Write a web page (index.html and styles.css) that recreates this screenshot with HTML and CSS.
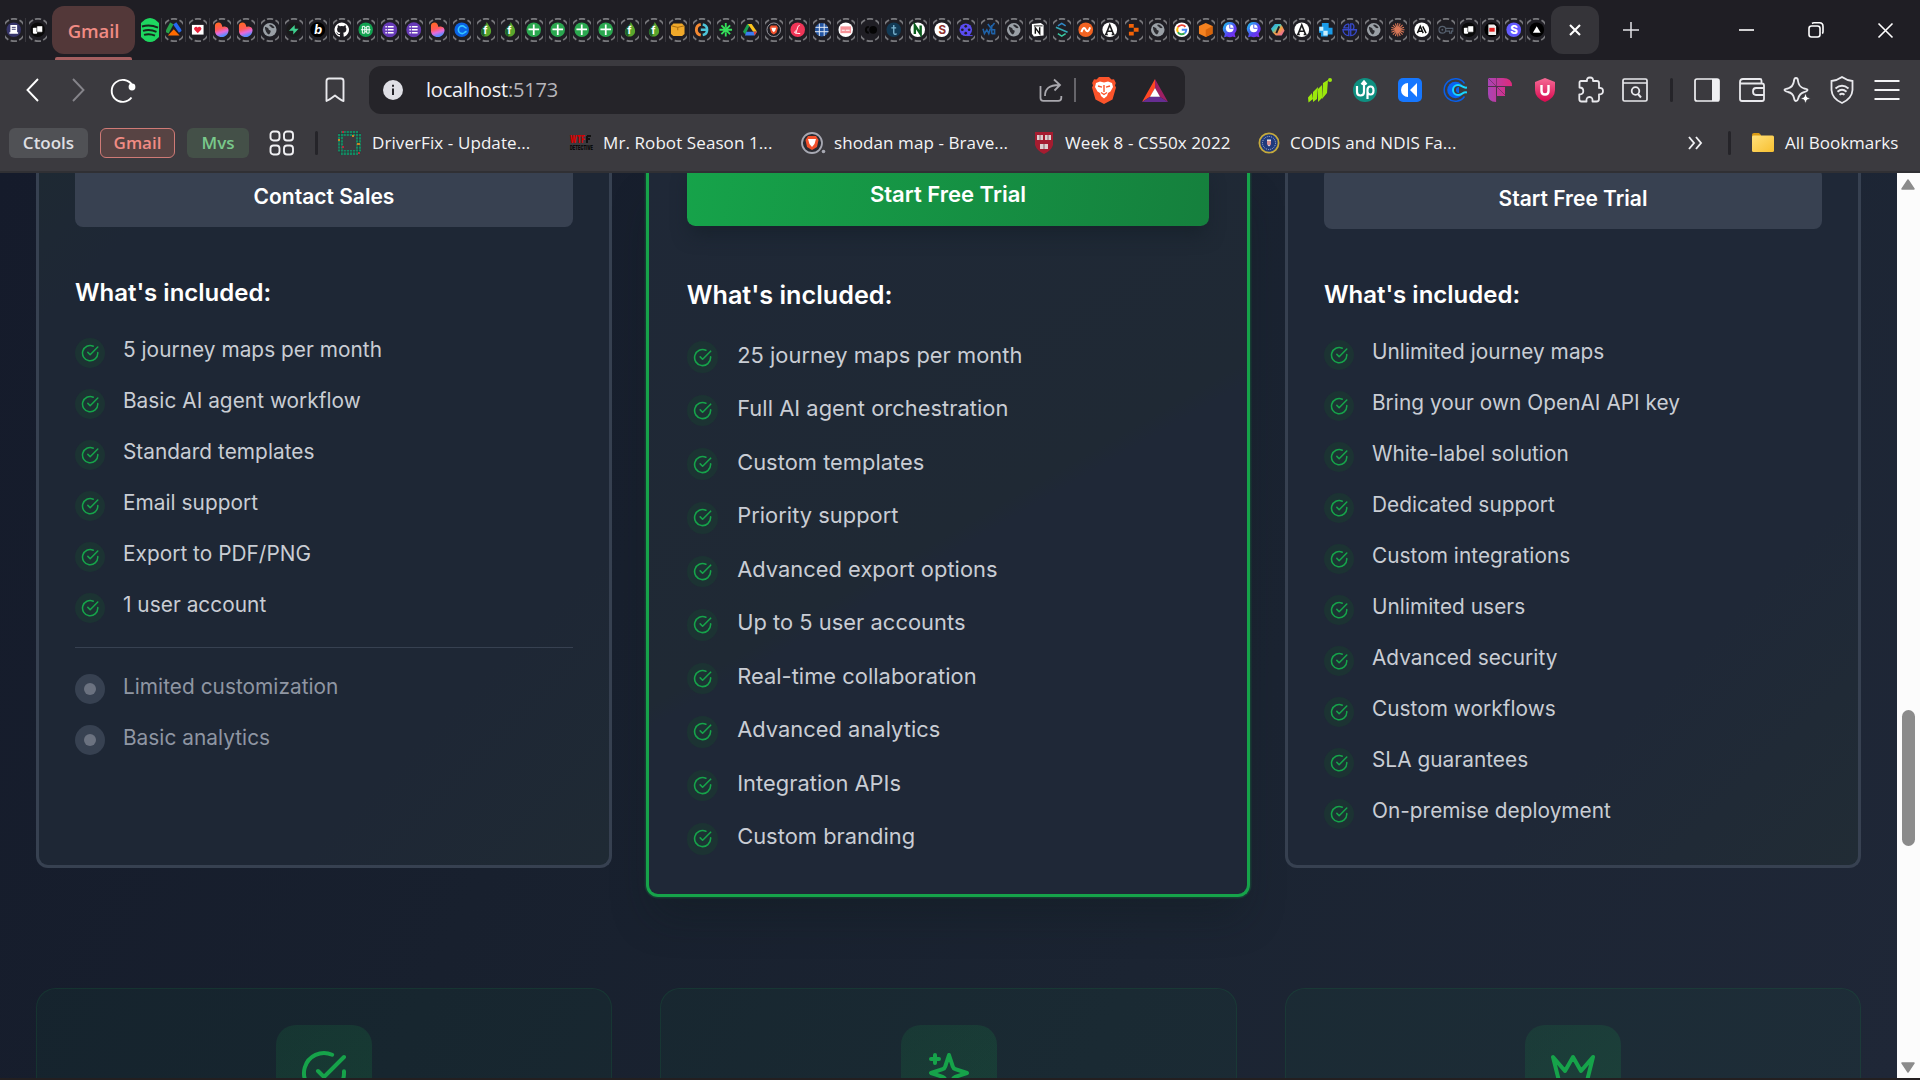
FILE: index.html
```html
<!DOCTYPE html>
<html lang="en">
<head>
<meta charset="utf-8">
<title>Pricing</title>
<link rel="stylesheet" href="styles.css">
</head>
<body>
<svg class="defs" width="0" height="0">
<defs>
<linearGradient id="gHeart" x1="0" y1="0" x2="0.3" y2="1"><stop offset="0" stop-color="#ff6a1a"/><stop offset=".5" stop-color="#ff5a5a"/><stop offset=".75" stop-color="#e36adf"/><stop offset="1" stop-color="#5b8cff"/></linearGradient>
<linearGradient id="gPie" x1="0" y1="0" x2="1" y2="1"><stop offset="0" stop-color="#18d0f0"/><stop offset=".6" stop-color="#5a3df0"/><stop offset="1" stop-color="#8a2cf0"/></linearGradient>
<linearGradient id="gCop" x1="0" y1="0" x2="1" y2="1"><stop offset="0" stop-color="#2a8cf0"/><stop offset=".35" stop-color="#45c8c0"/><stop offset=".55" stop-color="#f5a03c"/><stop offset="1" stop-color="#e85ac0"/></linearGradient>
<linearGradient id="gF" x1="0" y1="0" x2="1" y2="0"><stop offset="0" stop-color="#a845b5"/><stop offset="1" stop-color="#e02a7a"/></linearGradient>
<linearGradient id="gU" x1="0" y1="0" x2="0" y2="1"><stop offset="0" stop-color="#f56a95"/><stop offset="1" stop-color="#d8084f"/></linearGradient>
<linearGradient id="gFold" x1="0" y1="0" x2="1" y2="1"><stop offset="0" stop-color="#ffe07a"/><stop offset="1" stop-color="#f8c030"/></linearGradient>
<symbol id="ring" viewBox="0 0 18 24"><circle cx="9" cy="12" r="11.2" fill="none" stroke="#77777b" stroke-width="1.8" stroke-dasharray="6.3 2.496" transform="rotate(-106 9 12)"/></symbol>
<symbol id="doc" viewBox="0 0 16 16"><circle cx="8" cy="8" r="7.5" fill="#36356b"/><path d="M4.5 3h7v7.5h1V12h-9v-1.500h1z" fill="#fff"/><path d="M6 5.500h4M6 7.500h4" stroke="#36356b"/></symbol>
<symbol id="cards" viewBox="0 0 16 16"><circle cx="8" cy="8" r="7.5" fill="#0a0a0a"/><rect x="3" y="6" width="4.500" height="6" rx=".8" fill="#fff"/><rect x="7" y="4" width="6" height="6.500" rx=".8" fill="#fff" stroke="#0a0a0a" stroke-width=".6"/></symbol>
<symbol id="tri" viewBox="0 0 16 16"><path d="M6 1.500 1 11" stroke="#27a34a" stroke-width="4"/><path d="M9 1.500 15 10" stroke="#2468f2" stroke-width="4"/><path d="M8 7.500 14 14H2z" fill="#ff6a00"/></symbol>
<symbol id="mail" viewBox="0 0 16 16"><rect x="2" y="3" width="12" height="10" fill="#fff"/><path d="M8 11.500 4.500 8a2 2 0 0 1 3.500-2 2 2 0 0 1 3.500 2z" fill="#e8213a"/></symbol>
<symbol id="heart" viewBox="0 0 16 16"><path d="M1 3.500C1 1.500 3 .5 4.500.5 7 .5 8.500 2.500 8.500 5c1-.8 6.500-1 6.500 3.500 0 3.500-3 7-7 7S1 13 1 9z" fill="url(#gHeart)"/></symbol>
<symbol id="globe" viewBox="0 0 16 16"><circle cx="8" cy="8" r="7" fill="#9aa0a6"/><path d="M3 5c2 1 4 1 4 3l2 1c0 2-1 3-2 4-2-1-4-4-4-8zM8 2.500c2 0 4 1.500 5 3.500-2 1-3 0-4-1s-2-1-1-2.500z" fill="#2b2b30"/></symbol>
<symbol id="bolt" viewBox="0 0 16 16"><circle cx="8" cy="8" r="7.500" fill="#1a1b1b"/><path d="M9 3v4h4l-5.500 6V9H3z" fill="#3ecf8e"/></symbol>
<symbol id="bb" viewBox="0 0 16 16"><circle cx="8" cy="8" r="7.700" fill="#000"/><text x="4.500" y="12.500" font-size="13" font-weight="700" font-style="italic" fill="#fff" font-family="Inter">b</text></symbol>
<symbol id="git" viewBox="0 0 16 16"><path d="M8 .5a7.500 7.500 0 0 0-2.400 14.600c.4 0 .5-.2.500-.4v-1.400c-2 .4-2.600-.9-2.600-.9-.4-.9-.9-1.100-.9-1.100-.7-.5 0-.5 0-.5.800 0 1.200.8 1.200.8.700 1.200 1.900.9 2.300.7 0-.5.300-.9.500-1.100-1.700-.2-3.400-.9-3.400-3.700 0-.8.300-1.500.8-2-.1-.2-.4-1 0-2 0 0 .7-.2 2.100.8a7 7 0 0 1 3.800 0c1.400-1 2.100-.8 2.100-.8.400 1 .1 1.800 0 2 .5.500.8 1.200.8 2 0 2.900-1.700 3.500-3.400 3.700.3.200.5.700.5 1.400v2.100c0 .2.100.4.500.4A7.500 7.500 0 0 0 8 .5z" fill="#fff"/></symbol>
<symbol id="knot" viewBox="0 0 16 16"><circle cx="8" cy="8" r="7.500" fill="#12a150"/><path d="M7 4.500H4.500v7H7zM9 4.500h2.500v7H9zM3 8h10M7 6h2M7 10h2" fill="none" stroke="#fff" stroke-width="1"/></symbol>
<symbol id="form" viewBox="0 0 16 16"><circle cx="8" cy="8" r="7.700" fill="#673ab7"/><path d="M6 5h6M6 8h6M6 11h6" stroke="#fff" stroke-width="1.500"/><path d="M3.500 5H5M3.500 8H5M3.500 11H5" stroke="#fff" stroke-width="1.500"/></symbol>
<symbol id="cc" viewBox="0 0 24 24"><path d="M21.500 5.500A11.200 11.200 0 1 0 21.500 18.500" fill="none" stroke="#0a5fe8" stroke-width="1.500"/><circle cx="12.500" cy="12" r="8.300" fill="#0a63f0"/><path d="M24 9.500c-4 1-5-2.500-9-2.500a5 5 0 0 0 0 10c4 0 5-3.500 9-2.500" fill="#3b3a3f" stroke="#18d7ff" stroke-width="2"/><path d="M16 9a3 3 0 0 0 0 6z" fill="#0a63f0"/></symbol>
<symbol id="cb" viewBox="0 0 16 16"><circle cx="8" cy="8" r="7.500" fill="#0b63e5"/><path d="M13 6c-2 .5-2-2-4.500-2a4 4 0 0 0 0 8c2.500 0 2.500-2.500 4.500-2" fill="none" stroke="#35c6ff" stroke-width="1.700"/></symbol>
<symbol id="leaf" viewBox="0 0 16 16"><path d="M9 0c2 4 5 6 4.500 10S9 15.500 6.500 15 2 11 3.500 8 8 4 9 0z" fill="#5aa62c"/><path d="M9 0C8 4 4.500 5 3.500 8s.5 6 3 7z" fill="#1d6530"/><text x="5.500" y="12.500" font-size="11" font-weight="700" fill="#fff" font-family="Inter">f</text></symbol>
<symbol id="plus" viewBox="0 0 16 16"><circle cx="8" cy="8" r="7.500" fill="#2aa74f"/><path d="M8 2.500v11M2.500 7.500h11" stroke="#fff" stroke-width="1.800"/></symbol>
<symbol id="box" viewBox="0 0 16 16"><path d="M1 4l2.500-2.500h9L15 4v8.500L12.500 14.500h-9L1 12.500z" fill="#f0a92a"/><path d="M1.500 4l6.500 1.500L14.500 4M8 5.500v3" stroke="#a86c10" fill="none"/></symbol>
<symbol id="ce" viewBox="0 0 16 16"><path d="M7 2.500a5.600 5.600 0 0 0 0 11" fill="none" stroke="#f58a33" stroke-width="3"/><path d="M9 2.500a5.600 5.600 0 0 1 0 11M7 8h6" fill="none" stroke="#4dc4d8" stroke-width="2.600"/></symbol>
<symbol id="star" viewBox="0 0 16 16"><path d="M8 1v5M8 10.500v4.500M1.500 8h13M3.500 3.500l4.500 4.500 4.500-4.500M3.500 12.500 8 8l4.500 4.500" fill="none" stroke="#35e05a" stroke-width="1.900"/></symbol>
<symbol id="drive" viewBox="0 0 16 16"><path d="M5.500 2h3L3.500 13 1 10z" fill="#1aa052"/><path d="M6 2h4l5.500 8h-4z" fill="#fcc31d"/><path d="M4.500 10h11L13 14H3z" fill="#3b7cf0"/><path d="M12 10h3.500L13 14z" fill="#e94435"/></symbol>
<symbol id="lion" viewBox="0 0 16 16"><circle cx="8" cy="8" r="7" fill="none" stroke="#999aa2"/><path d="M5 3.500h6l1.300 2.500-1.500 5L8 13l-2.800-2L3.700 6z" fill="#f2502b"/><path d="M5.500 6h5L9.500 9 8 10.500 6.500 9z" fill="#fff"/></symbol>
<symbol id="ll" viewBox="0 0 16 16"><circle cx="8" cy="8" r="7.500" fill="#ef3557"/><path d="M10 3.500C8 3 7.500 8 6 11.500l4.500.5M6 11.500c-2 0-1.500-2 .5-2.500" stroke="#fff" fill="none"/></symbol>
<symbol id="grid" viewBox="0 0 16 16"><circle cx="8" cy="8" r="7" fill="#2456a3"/><path d="M1.500 5.500h13M1 10h14M5.500 1.500v13M10.500 1.500v13" stroke="#e7edf5"/></symbol>
<symbol id="sub" viewBox="0 0 16 16"><circle cx="8" cy="8" r="7.500" fill="#fff"/><rect x="2.500" y="4.500" width="11" height="7" fill="#f59298"/><path d="M4 8.500h3M8 8.500h4" stroke="#fff"/></symbol>
<symbol id="co" viewBox="0 0 16 16"><path d="M7 5a3 3 0 1 0 0 6" fill="none" stroke="#050505" stroke-width="2"/><circle cx="11.500" cy="8" r="4" fill="#050505"/></symbol>
<symbol id="tt" viewBox="0 0 16 16"><circle cx="8" cy="8" r="7.500" fill="#123a55"/><path d="M8 3v8c0 2 2 2 3 1M5.500 6h5" stroke="#7bb4d0" stroke-width="1.400" fill="none"/></symbol>
<symbol id="nn" viewBox="0 0 16 16"><circle cx="8" cy="8" r="7.500" fill="#fff"/><path d="M5 12.500v-9L11 12.500v-9" stroke="#0b5d1e" stroke-width="2.500" fill="none"/></symbol>
<symbol id="ss" viewBox="0 0 16 16"><circle cx="8" cy="8" r="7.500" fill="#fff"/><text x="4.600" y="12.200" font-size="12" font-weight="700" fill="#8d3030" font-family="Inter">S</text></symbol>
<symbol id="reel" viewBox="0 0 16 16"><circle cx="8" cy="8" r="6.500" fill="#5a4cf0"/><g fill="#1f1e24"><circle cx="8" cy="4.500" r="1.400"/><circle cx="8" cy="11.500" r="1.400"/><circle cx="4.500" cy="8" r="1.400"/><circle cx="11.500" cy="8" r="1.400"/></g><path d="M9 14h6" stroke="#5a4cf0"/></symbol>
<symbol id="wb" viewBox="0 0 16 16"><path d="M1 7l1.500 5L5 8l2 4 1.500-5M10 3v9M10 12h3V8h-3M6 2l3 4 4-5" stroke="#1f62a8" stroke-width="1.600" fill="none"/></symbol>
<symbol id="notion" viewBox="0 0 16 16"><path d="M2 2l9-1 3 2v11l-10 1-2-3z" fill="#fff"/><path d="M5.500 12V6l4.500 6V5.500" stroke="#111" stroke-width="1.500" fill="none"/><path d="M4 4h9" stroke="#222"/></symbol>
<symbol id="sl" viewBox="0 0 16 16"><path d="M12 4 8 1.500 4 4" stroke="#318ac8" stroke-width="1.600" fill="none"/><path d="M2 5.500l12 5" stroke="#35a9b4" stroke-width="1.600"/><path d="M4 12l4 2.500 4-2.500" stroke="#3ac8a0" stroke-width="1.600" fill="none"/></symbol>
<symbol id="nw" viewBox="0 0 16 16"><circle cx="8" cy="8" r="7.600" fill="#f26322"/><path d="M3.500 10.500c2-6 3.500-4.500 4.500-2.500s2.500 3 4.500-2.500" stroke="#fff" stroke-width="2" fill="none"/></symbol>
<symbol id="aw" viewBox="0 0 16 16"><circle cx="8" cy="8" r="7.600" fill="#fff"/><path d="M4 13 8 3l4 10M5.500 9.500h5M3 13h3M10 13h3" stroke="#1d1d1f" stroke-width="1.600" fill="none"/></symbol>
<symbol id="rep" viewBox="0 0 16 16"><path d="M3 2h5v4H3zM8 6h5v4H8zM3 10h5v4H3z" fill="#f26207"/></symbol>
<symbol id="goog" viewBox="0 0 16 16"><circle cx="8" cy="8" r="7.600" fill="#fff"/><path d="M11.800 5A4.800 4.800 0 0 0 4 5.500" stroke="#ea4335" stroke-width="2" fill="none"/><path d="M4 5.500a5 5 0 0 0 0 5" stroke="#fbbc05" stroke-width="2" fill="none"/><path d="M4 10.500a4.800 4.800 0 0 0 7 1.200" stroke="#34a853" stroke-width="2" fill="none"/><path d="M11 11.700c1.500-1.200 1.700-2.700 1.700-3.700H8" stroke="#4285f4" stroke-width="2" fill="none"/></symbol>
<symbol id="hex" viewBox="0 0 16 16"><path d="M8 1l7 3v8l-7 3.500L1 12V4z" fill="#f58220"/><path d="M8 8v7.500L15 12V4z" fill="#d8650c"/></symbol>
<symbol id="pie" viewBox="0 0 16 16"><path d="M8 0a7 7 0 0 1 5 12l1 4-3-1-3 1-3-1-3 1 1-4A7 7 0 0 1 8 0z" fill="url(#gPie)"/><circle cx="8" cy="6.500" r="4" fill="#fff"/><path d="M8 2.500v4h4" stroke="#5a5df0" fill="none"/></symbol>
<symbol id="cop" viewBox="0 0 16 16"><path d="M5 2h6l2 3 2 4-3 5H6L3 11 1 7z" fill="url(#gCop)"/><path d="M9.500 4.500 6.500 11.500" stroke="#1f1e24" stroke-width="2"/></symbol>
<symbol id="sq" viewBox="0 0 16 16"><path d="M4 1h7v5h4v7h-5v2H3v-4H1V5h3z" fill="#1a9be8"/><path d="M1.500 5h4v4h-4zM5.500 9H10v5H5.500z" fill="#c9eefc"/></symbol>
<symbol id="op" viewBox="0 0 16 16"><path d="M7 2v12A6 6 0 0 1 1 8h14a6 6 0 0 1-6 6V2h2a4 4 0 0 1 0 6M7 2a6 6 0 0 0-5 4h5" fill="none" stroke="#3648c8" stroke-width="1.400"/></symbol>
<symbol id="burst" viewBox="0 0 16 16"><path d="M8 1v14M1 8h14M3 3l10 10M13 3 3 13M5.500 1.500l5 13M10.500 1.500l-5 13M1.500 5.500l13 5M1.500 10.500l13-5" stroke="#d97757" stroke-width="1.100"/></symbol>
<symbol id="ai" viewBox="0 0 16 16"><circle cx="8" cy="8" r="7.600" fill="#fff"/><path d="M3.500 11.500 6.500 4.500l3 7M4.500 9.500h4M9 4.500l3.500 7" stroke="#111" stroke-width="1.500" fill="none"/></symbol>
<symbol id="key" viewBox="0 0 16 16"><circle cx="4.500" cy="8" r="3.500" fill="none" stroke="#56606e" stroke-width="1.200"/><circle cx="4.500" cy="8" r="1" fill="#56606e"/><path d="M8 6.500h7.500v3H14v2h-2v-2H8" fill="none" stroke="#56606e" stroke-width="1.200"/></symbol>
<symbol id="pdf" viewBox="0 0 16 16"><circle cx="8" cy="8" r="7.600" fill="#000"/><path d="M4.500 2.500h6l2 2v9h-8z" fill="#eee"/><rect x="5.500" y="6" width="5.500" height="4" fill="#e02020"/></symbol>
<symbol id="sp" viewBox="0 0 16 16"><circle cx="8" cy="8" r="7.600" fill="#635bff"/><text x="4.300" y="12.500" font-size="12" font-weight="800" fill="#fff" font-family="Inter">S</text></symbol>
<symbol id="ver" viewBox="0 0 16 16"><circle cx="8" cy="8" r="7.600" fill="#000"/><path d="M8 4.500 12 11H4z" fill="#fff"/></symbol>
<symbol id="check" viewBox="0 0 24 24"><path d="M22 11.080V12a10 10 0 1 1-5.930-9.140M22 4 12 14.010l-3-3" fill="none" stroke="#16a34a" stroke-width="2" stroke-linecap="round" stroke-linejoin="round"/></symbol>
</defs>
</svg>

<div class="browser">
  <div class="tabstrip">
    <div class="tabs tabs-first">
      <div class="tab"><svg class="ring"><use href="#ring"/></svg><svg class="fav"><use href="#doc"/></svg></div>
      <div class="tab plain"><svg class="ring"><use href="#ring"/></svg><svg class="fav"><use href="#cards"/></svg></div>
    </div>
    <div class="tab-group">Gmail</div>
    <div class="tabs">
      <div class="tab"><svg class="spot" viewBox="0 0 18 24"><path d="M4 1.500Q9-1.500 14 1.500L18 5v14l-4 3.500q-5 3-10 0L0 19V5z" fill="#1ed760"/><path d="M1 8.500q8-2.500 16 1.200M2 12.800q7-2 13.500 1M3 16.800q6-1.600 11 .9" fill="none" stroke="#17271c" stroke-width="1.900"/></svg></div>
      <div class="tab"><svg class="ring"><use href="#ring"/></svg><svg class="fav"><use href="#tri"/></svg></div>
      <div class="tab"><svg class="ring"><use href="#ring"/></svg><svg class="fav"><use href="#mail"/></svg></div>
      <div class="tab"><svg class="ring"><use href="#ring"/></svg><svg class="fav"><use href="#heart"/></svg></div>
      <div class="tab"><svg class="ring"><use href="#ring"/></svg><svg class="fav"><use href="#heart"/></svg></div>
      <div class="tab"><svg class="ring"><use href="#ring"/></svg><svg class="fav"><use href="#globe"/></svg></div>
      <div class="tab"><svg class="ring"><use href="#ring"/></svg><svg class="fav"><use href="#bolt"/></svg></div>
      <div class="tab"><svg class="ring"><use href="#ring"/></svg><svg class="fav"><use href="#bb"/></svg></div>
      <div class="tab"><svg class="ring"><use href="#ring"/></svg><svg class="fav"><use href="#git"/></svg></div>
      <div class="tab"><svg class="ring"><use href="#ring"/></svg><svg class="fav"><use href="#knot"/></svg></div>
      <div class="tab"><svg class="ring"><use href="#ring"/></svg><svg class="fav"><use href="#form"/></svg></div>
      <div class="tab"><svg class="ring"><use href="#ring"/></svg><svg class="fav"><use href="#form"/></svg></div>
      <div class="tab"><svg class="ring"><use href="#ring"/></svg><svg class="fav"><use href="#heart"/></svg></div>
      <div class="tab"><svg class="ring"><use href="#ring"/></svg><svg class="fav"><use href="#cb"/></svg></div>
      <div class="tab"><svg class="ring"><use href="#ring"/></svg><svg class="fav"><use href="#leaf"/></svg></div>
      <div class="tab"><svg class="ring"><use href="#ring"/></svg><svg class="fav"><use href="#leaf"/></svg></div>
      <div class="tab"><svg class="ring"><use href="#ring"/></svg><svg class="fav"><use href="#plus"/></svg></div>
      <div class="tab"><svg class="ring"><use href="#ring"/></svg><svg class="fav"><use href="#plus"/></svg></div>
      <div class="tab"><svg class="ring"><use href="#ring"/></svg><svg class="fav"><use href="#plus"/></svg></div>
      <div class="tab"><svg class="ring"><use href="#ring"/></svg><svg class="fav"><use href="#plus"/></svg></div>
      <div class="tab"><svg class="ring"><use href="#ring"/></svg><svg class="fav"><use href="#leaf"/></svg></div>
      <div class="tab"><svg class="ring"><use href="#ring"/></svg><svg class="fav"><use href="#leaf"/></svg></div>
      <div class="tab"><svg class="ring"><use href="#ring"/></svg><svg class="fav"><use href="#box"/></svg></div>
      <div class="tab"><svg class="ring"><use href="#ring"/></svg><svg class="fav"><use href="#ce"/></svg></div>
      <div class="tab"><svg class="ring"><use href="#ring"/></svg><svg class="fav"><use href="#star"/></svg></div>
      <div class="tab"><svg class="ring"><use href="#ring"/></svg><svg class="fav"><use href="#drive"/></svg></div>
      <div class="tab"><svg class="ring"><use href="#ring"/></svg><svg class="fav"><use href="#lion"/></svg></div>
      <div class="tab"><svg class="ring"><use href="#ring"/></svg><svg class="fav"><use href="#ll"/></svg></div>
      <div class="tab"><svg class="ring"><use href="#ring"/></svg><svg class="fav"><use href="#grid"/></svg></div>
      <div class="tab"><svg class="ring"><use href="#ring"/></svg><svg class="fav"><use href="#sub"/></svg></div>
      <div class="tab"><svg class="ring"><use href="#ring"/></svg><svg class="fav"><use href="#co"/></svg></div>
      <div class="tab"><svg class="ring"><use href="#ring"/></svg><svg class="fav"><use href="#tt"/></svg></div>
      <div class="tab"><svg class="ring"><use href="#ring"/></svg><svg class="fav"><use href="#nn"/></svg></div>
      <div class="tab"><svg class="ring"><use href="#ring"/></svg><svg class="fav"><use href="#ss"/></svg></div>
      <div class="tab"><svg class="ring"><use href="#ring"/></svg><svg class="fav"><use href="#reel"/></svg></div>
      <div class="tab"><svg class="ring"><use href="#ring"/></svg><svg class="fav"><use href="#wb"/></svg></div>
      <div class="tab"><svg class="ring"><use href="#ring"/></svg><svg class="fav"><use href="#globe"/></svg></div>
      <div class="tab"><svg class="ring"><use href="#ring"/></svg><svg class="fav"><use href="#notion"/></svg></div>
      <div class="tab"><svg class="ring"><use href="#ring"/></svg><svg class="fav"><use href="#sl"/></svg></div>
      <div class="tab"><svg class="ring"><use href="#ring"/></svg><svg class="fav"><use href="#nw"/></svg></div>
      <div class="tab"><svg class="ring"><use href="#ring"/></svg><svg class="fav"><use href="#aw"/></svg></div>
      <div class="tab"><svg class="ring"><use href="#ring"/></svg><svg class="fav"><use href="#rep"/></svg></div>
      <div class="tab"><svg class="ring"><use href="#ring"/></svg><svg class="fav"><use href="#globe"/></svg></div>
      <div class="tab"><svg class="ring"><use href="#ring"/></svg><svg class="fav"><use href="#goog"/></svg></div>
      <div class="tab"><svg class="ring"><use href="#ring"/></svg><svg class="fav"><use href="#hex"/></svg></div>
      <div class="tab"><svg class="ring"><use href="#ring"/></svg><svg class="fav"><use href="#pie"/></svg></div>
      <div class="tab"><svg class="ring"><use href="#ring"/></svg><svg class="fav"><use href="#pie"/></svg></div>
      <div class="tab"><svg class="ring"><use href="#ring"/></svg><svg class="fav"><use href="#cop"/></svg></div>
      <div class="tab"><svg class="ring"><use href="#ring"/></svg><svg class="fav"><use href="#aw"/></svg></div>
      <div class="tab"><svg class="ring"><use href="#ring"/></svg><svg class="fav"><use href="#sq"/></svg></div>
      <div class="tab"><svg class="ring"><use href="#ring"/></svg><svg class="fav"><use href="#op"/></svg></div>
      <div class="tab"><svg class="ring"><use href="#ring"/></svg><svg class="fav"><use href="#globe"/></svg></div>
      <div class="tab"><svg class="ring"><use href="#ring"/></svg><svg class="fav"><use href="#burst"/></svg></div>
      <div class="tab"><svg class="ring"><use href="#ring"/></svg><svg class="fav"><use href="#ai"/></svg></div>
      <div class="tab"><svg class="ring"><use href="#ring"/></svg><svg class="fav"><use href="#key"/></svg></div>
    </div>
    <div class="tabs tabs-last">
      <div class="tab"><svg class="ring"><use href="#ring"/></svg><svg class="fav"><use href="#cards"/></svg></div>
      <div class="tab"><svg class="ring"><use href="#ring"/></svg><svg class="fav"><use href="#pdf"/></svg></div>
      <div class="tab"><svg class="ring"><use href="#ring"/></svg><svg class="fav"><use href="#sp"/></svg></div>
      <div class="tab plain"><svg class="ring"><use href="#ring"/></svg><svg class="fav"><use href="#ver"/></svg></div>
    </div>
    <div class="tab-active"><svg width="12" height="12"><path d="M1 1l10 10M11 1 1 11" stroke="#fff" stroke-width="2.100"/></svg></div>
    <svg class="tab-new" width="16" height="16"><path d="M8 0v16M0 8h16" stroke="#e4e4e8" stroke-width="1.500"/></svg>
    <div class="win">
      <svg width="15" height="15"><path d="M0 7h15" stroke="#fff" stroke-width="1.600"/></svg>
      <svg width="16" height="16"><rect x="1" y="4" width="11" height="11" rx="2.500" fill="none" stroke="#fff" stroke-width="1.600"/><path d="M4 1.500Q5 .8 6 .8h5.500Q15 1 15 4.500v5q0 1.500-.8 2" fill="none" stroke="#fff" stroke-width="1.600"/></svg>
      <svg width="15" height="15"><path d="M.5.500l14 14M14.500.500l-14 14" stroke="#fff" stroke-width="1.600"/></svg>
    </div>
  </div>

  <div class="toolbar">
    <svg class="nav-back" width="14" height="24"><path d="M12 1 1.500 12 12 23" fill="none" stroke="#fff" stroke-width="1.900"/></svg>
    <svg class="nav-fwd" width="14" height="24"><path d="M1 1l10.500 11L1 23" fill="none" stroke="#85848a" stroke-width="1.900"/></svg>
    <svg class="nav-reload" width="26" height="26"><path d="M22 8A11 11 0 1 0 21.500 20.500" fill="none" stroke="#fff" stroke-width="1.900"/><circle cx="22" cy="10" r="3.400" fill="#fff"/></svg>
    <svg class="nav-mark" width="20" height="26"><path d="M1.500 24V4q0-2.500 2.500-2.500h12q2.500 0 2.500 2.500v20q-3-1-8.500-5.500Q5 22.500 1.500 24z" fill="none" stroke="#e9e9ed" stroke-width="1.900" stroke-linejoin="round"/></svg>
    <div class="urlbar">
      <svg width="20" height="20"><circle cx="10" cy="10" r="10" fill="#dfdfe5"/><path d="M10 8.500v6.500M10 4.800v2" stroke="#252429" stroke-width="2"/></svg>
      <span class="url">localhost<span class="port">:5173</span></span>
      <svg class="share" width="24" height="24"><path d="M1.500 8v12q0 2.800 2.800 2.800h15q3 0 3-2.800v-2M6 18c0-7 4-11 14-11M15 1.500 21 7l-5.500 5.500" fill="none" stroke="#a9a8ae" stroke-width="1.800"/></svg>
      <span class="url-sep"></span>
      <svg class="brave" width="24" height="27" viewBox="0 0 24 27"><path d="M7 0h10l2.500 2.500L22 2.200 23.800 6 23 8.500l1 2-3.500 12L12 27l-8.500-4.500L0 10.500l1-2L.2 6 2 2.200l2.500.3z" fill="#fb542b"/><path d="M4 6l4-1.500 4 1 4-1L20 6l1 4-2.500 4.500L16 16l-1 3-3 2.500L9 19l-1-3-2.500-1.500L3 10z" fill="#fff"/><path d="M6 9l4 1.200M18 9l-4 1.200M12 8v7M9 15.500l3 2 3-2" stroke="#fb542b" stroke-width="1.400" fill="none"/></svg>
      <svg class="bat" width="26" height="23" viewBox="0 0 26 23"><path d="M13 0 0 23l8.500-5.500L13 9z" fill="#ff4724"/><path d="M13 0l13 23-8.500-5.500L13 9z" fill="#9e1f63"/><path d="M0 23h26l-8.500-5.500h-9z" fill="#662d91"/><path d="M13 9l5 8.700H8z" fill="#fff"/></svg>
    </div>
    <div class="extensions">
      <svg viewBox="0 0 24 24"><path d="M0 19.500 4 15l1 6-4.500 3.500zM5 14l5-5-1 12-4 3zM10 11l4-4v13l-4 4zM15 5l5-3-1 13-5 6z" fill="#9be80c"/><circle cx="22" cy="2" r="2" fill="#9be80c"/></svg>
      <svg viewBox="0 0 24 24"><circle cx="12" cy="12" r="12" fill="#0f8f80"/><path d="M4 8v6q0 3.500 3.500 3.500T11 14V4M8.500 6.500 11 3.500l2.500 3M14.500 21V12q0-3.500 3-3.500t3 4-3 4-3-3" fill="none" stroke="#fff" stroke-width="2.200"/></svg>
      <svg viewBox="0 0 24 24"><rect width="24" height="24" rx="5" fill="#1677ff"/><path d="M10 5v14a7 7 0 0 1 0-14zM19 5v14l-7-7z" fill="#fff"/></svg>
      <svg viewBox="0 0 24 24"><use href="#cc"/></svg>
      <svg viewBox="0 0 24 24"><path d="M0 0h15q9 0 9 8H0zM0 9h8v15Q0 24 0 16zM9 9h8v9H9z" fill="url(#gF)"/><path d="M8.500 0v24M0 8.500h24M0 0l8 8M9 9l8 8" stroke="#5c2b52" stroke-width=".6"/></svg>
      <svg viewBox="0 0 24 24"><path d="M12 0l10 4v8q0 8-10 12Q2 20 2 12V4z" fill="url(#gU)"/><path d="M8.500 7v6q0 3.500 3.500 3.500t3.500-3.500V7" fill="none" stroke="#fff" stroke-width="2.400"/></svg>
      <svg viewBox="0 0 24 24"><path d="M1.500 4.500Q1.500 3 3 3H9Q8.500-.5 12-.5T15 3h4Q21 3 21 5v5q4-.5 4 3t-4 3.500v4.500q0 2.500-2.500 2.500h-4Q15 19 11.500 19t-3 4.500h-5Q1.300 23.500 1.300 21v-4.500q4 0 4-3.500t-3.800-3.500z" fill="none" stroke="#e9e9ed" stroke-width="1.800" stroke-linejoin="round"/></svg>
      <svg viewBox="0 0 24 24"><rect x="0" y="1" width="24" height="22" rx="1.500" fill="none" stroke="#e9e9ed" stroke-width="1.700"/><path d="M0 5h24" stroke="#e9e9ed" stroke-width="1.500"/><circle cx="12.500" cy="13" r="3.800" fill="none" stroke="#e9e9ed" stroke-width="1.800"/><path d="M15 16l3 3.500" stroke="#e9e9ed" stroke-width="2"/></svg>
    </div>
    <span class="sep tool-sep"></span>
    <div class="extensions tools">
      <svg viewBox="0 0 24 24"><rect x="0" y="1" width="24" height="22" rx="2" fill="none" stroke="#f0f0f3" stroke-width="1.700"/><path d="M17 1h7v22h-7z" fill="#f0f0f3"/></svg>
      <svg viewBox="0 0 24 24"><path d="M0 4q0-3 3-3h17q1.500 0 1.500 1.500V5M0 4q0 1.500 2 1.500h20q2 0 2 2V21q0 2-2 2H2q-2 0-2-2zM24 10h-8q-3 0-3 3.500t3 3.500h8" fill="none" stroke="#e9e9ed" stroke-width="1.800"/></svg>
      <svg viewBox="0 0 24 24"><path d="M11 0q2 0 2 3 .8 6 6 7.500 3.500.5 3.500 1.500t-3 2q-5 1-6.500 7Q12.500 23 11 23t-2-3Q8 15 3 14-.5 13-.5 12T3 10.500Q8 9 9 3q0-3 2-3z" fill="none" stroke="#e9e9ed" stroke-width="1.800"/><path d="M20.500 15l1.500 4 3.500 1.500L22 22l-1.500 3.500L19 22l-3.500-1.500L19 19z" fill="#fff" stroke="#3b3a3f" stroke-width=".8"/></svg>
      <svg viewBox="0 0 24 24"><path d="M12-1Q17 2.500 22.500 3v9Q22 20.500 12 25 2 20.500 1.500 12V3Q7 2.500 12-1z" fill="none" stroke="#e9e9ed" stroke-width="1.800"/><path d="M5.500 10.500q6.500-5.500 13 0M7.500 13.800q4.500-4 9 0M9.500 16.800q2.500-2 5 0" fill="none" stroke="#e9e9ed" stroke-width="1.900"/></svg>
      <svg viewBox="0 0 24 24"><path d="M-.5 3h25M-.5 12h25M-.5 21h25" stroke="#f3f3f5" stroke-width="1.800"/></svg>
    </div>
  </div>

  <div class="bookmarks">
    <span class="chip chip-gray">Ctools</span>
    <span class="chip chip-red">Gmail</span>
    <span class="chip chip-green">Mvs</span>
    <svg class="apps" width="26" height="26"><g fill="none" stroke="#f0f0f3" stroke-width="1.900"><rect x="1.500" y="1.500" width="9" height="9" rx="3"/><rect x="15" y="1.500" width="9" height="9" rx="3"/><rect x="1.500" y="15.500" width="9" height="9" rx="3"/><rect x="15" y="15.500" width="9" height="9" rx="3"/></g></svg>
    <span class="sep"></span>
    <div class="bm bm-1"><svg width="24" height="24"><rect x="2.500" y="2.500" width="18" height="19" fill="none" stroke="#128a62" stroke-width="5" stroke-dasharray="2.200 .9"/><path d="M2.500 0v24M20.500 0v24M0 2.500h23M0 21h23" stroke="#2d3436" stroke-width=".8"/><path d="M0 9h2M14 5h2M19 13h3" stroke="#c88424" stroke-width="2"/><path d="M4 1h2M20 22h2M4 16h2" stroke="#b22c3c" stroke-width="2"/></svg><span>DriverFix - Update...</span></div>
    <div class="bm bm-2"><svg width="24" height="16"><text x="0" y="8" font-size="10" font-weight="900" fill="#d60000" textLength="15" lengthAdjust="spacingAndGlyphs" font-family="Inter">WTF</text><path d="M17 1h4M17 1v7M17 4h3" stroke="#111" stroke-width="2"/><text x="0" y="15" font-size="6" font-weight="900" fill="#080808" textLength="23" lengthAdjust="spacingAndGlyphs" font-family="Inter">DETECTIVE</text></svg><span>Mr. Robot Season 1...</span></div>
    <div class="bm bm-3"><svg width="25" height="24"><circle cx="11" cy="12" r="10" fill="#292a31" stroke="#a7a8b2" stroke-width="1.800"/><path d="M7 5h8l2.500 4-1.500 7-5 3-5-3-1.500-7z" fill="#f2502b"/><path d="M7 8h8l-1.500 5-2.500 3-2.500-3z" fill="#fff"/><circle cx="22.500" cy="20.500" r="1.800" fill="#a7a8b2"/></svg><span>shodan map - Brave...</span></div>
    <div class="bm bm-4"><svg width="20" height="24"><path d="M1 1h18v13q-2 6-9 9-7-3-9-9z" fill="#a51c30"/><path d="M3 4h6v5H3zM11 4h6v5h-6zM6 13h8v5H6z" fill="#ded0d0"/><path d="M6 4v5M14 4v5M10 13v5" stroke="#87606a"/></svg><span>Week 8 - CS50x 2022</span></div>
    <div class="bm bm-5"><svg width="22" height="22"><circle cx="11" cy="11" r="9.600" fill="#203a7c" stroke="#c5aa3c" stroke-width="1.800"/><circle cx="11" cy="11" r="6.500" fill="none" stroke="#aeb8d0" stroke-dasharray="1 1"/><path d="M9 7.500h4v4q0 1.500-2 3-2-1.500-2-3z" fill="#e8e4e4"/><path d="M10 9v4M12 9v4" stroke="#c33b46"/></svg><span>CODIS and NDIS Fa...</span></div>
    <svg class="more" width="14" height="14"><path d="M1 1l5 6-5 6M8 1l5 6-5 6" fill="none" stroke="#f0f0f3" stroke-width="1.900"/></svg>
    <span class="sep sep-2"></span>
    <svg class="folder" width="24" height="20"><path d="M1 2q0-2 2-2h5l2 2v6H1z" fill="#d99a14"/><rect x="1" y="2.500" width="22" height="16.500" rx="1.500" fill="url(#gFold)"/></svg>
    <span class="allbm">All Bookmarks</span>
  </div>

  <div class="viewport">
    <main class="page">
      <div class="plans">
        <section class="plan">
          <div class="cta"><span>Contact Sales</span></div>
          <h3>What's included:</h3>
          <ul>
            <li><i><svg><use href="#check"/></svg></i>5 journey maps per month</li>
            <li><i><svg><use href="#check"/></svg></i>Basic AI agent workflow</li>
            <li><i><svg><use href="#check"/></svg></i>Standard templates</li>
            <li><i><svg><use href="#check"/></svg></i>Email support</li>
            <li><i><svg><use href="#check"/></svg></i>Export to PDF/PNG</li>
            <li><i><svg><use href="#check"/></svg></i>1 user account</li>
          </ul>
          <ul class="limits">
            <li><i></i>Limited customization</li>
            <li><i></i>Basic analytics</li>
          </ul>
        </section>
        <section class="plan popular">
          <div class="cta"><span>Start Free Trial</span></div>
          <h3>What's included:</h3>
          <ul>
            <li><i><svg><use href="#check"/></svg></i>25 journey maps per month</li>
            <li><i><svg><use href="#check"/></svg></i>Full AI agent orchestration</li>
            <li><i><svg><use href="#check"/></svg></i>Custom templates</li>
            <li><i><svg><use href="#check"/></svg></i>Priority support</li>
            <li><i><svg><use href="#check"/></svg></i>Advanced export options</li>
            <li><i><svg><use href="#check"/></svg></i>Up to 5 user accounts</li>
            <li><i><svg><use href="#check"/></svg></i>Real-time collaboration</li>
            <li><i><svg><use href="#check"/></svg></i>Advanced analytics</li>
            <li><i><svg><use href="#check"/></svg></i>Integration APIs</li>
            <li><i><svg><use href="#check"/></svg></i>Custom branding</li>
          </ul>
        </section>
        <section class="plan enterprise">
          <div class="cta"><span>Start Free Trial</span></div>
          <h3>What's included:</h3>
          <ul>
            <li><i><svg><use href="#check"/></svg></i>Unlimited journey maps</li>
            <li><i><svg><use href="#check"/></svg></i>Bring your own OpenAI API key</li>
            <li><i><svg><use href="#check"/></svg></i>White-label solution</li>
            <li><i><svg><use href="#check"/></svg></i>Dedicated support</li>
            <li><i><svg><use href="#check"/></svg></i>Custom integrations</li>
            <li><i><svg><use href="#check"/></svg></i>Unlimited users</li>
            <li><i><svg><use href="#check"/></svg></i>Advanced security</li>
            <li><i><svg><use href="#check"/></svg></i>Custom workflows</li>
            <li><i><svg><use href="#check"/></svg></i>SLA guarantees</li>
            <li><i><svg><use href="#check"/></svg></i>On-premise deployment</li>
          </ul>
        </section>
      </div>
      <div class="perks">
        <div class="perk"><div class="perk-icon"><svg viewBox="0 0 24 24"><use href="#check"/></svg></div></div>
        <div class="perk"><div class="perk-icon"><svg viewBox="0 0 24 24"><path d="m12 3-1.912 5.813a2 2 0 0 1-1.275 1.275L3 12l5.813 1.912a2 2 0 0 1 1.275 1.275L12 21l1.912-5.813a2 2 0 0 1 1.275-1.275L21 12l-5.813-1.912a2 2 0 0 1-1.275-1.275ZM5 3v4M19 17v4M3 5h4M17 19h4"/></svg></div></div>
        <div class="perk"><div class="perk-icon"><svg viewBox="0 0 24 24"><path d="m2 4 3 12h14l3-12-6 7-4-7-4 7-6-7zm3 16h14"/></svg></div></div>
      </div>
    </main>
    <div class="scrollbar">
      <svg width="14" height="11"><path d="M7 1 13 10H1z" fill="#8b8b8b" stroke="#8b8b8b" stroke-width="1.500" stroke-linejoin="round"/></svg>
      <span class="thumb"></span>
      <svg width="14" height="11"><path d="M7 10 13 1H1z" fill="#8b8b8b" stroke="#8b8b8b" stroke-width="1.500" stroke-linejoin="round"/></svg>
    </div>
  </div>
</div>
</body>
</html>
```
FILE: styles.css
```css
* { box-sizing: border-box; }
html, body { margin: 0; height: 100%; overflow: hidden; background: #231f20; }
body { font-family: "Inter", sans-serif; }
svg { display: block; flex: none; overflow: visible; }
.defs { position: absolute; }
.browser { width: 1920px; height: 1080px; display: flex; flex-direction: column; }

/* tab strip */
.tabstrip { height: 60px; background: #1f1e24; display: flex; align-items: center; flex: none; }
.tabs { display: flex; }
.tabs-first { margin-left: 2px; }
.tab { width: 24px; height: 24px; display: grid; place-items: center; border-right: 1.500px solid #38373d; flex: none; }
.tab.plain { border-right-color: transparent; }
.tab > * { grid-area: 1 / 1; }
.ring, .spot { width: 18px; height: 24px; overflow: hidden; }
.fav { width: 15.500px; height: 15.500px; }
.tabs-last .tab { width: 22.500px; }
.tab-group { width: 83px; height: 48px; margin: 0 3px 0 2px; border-radius: 12px; background: #533839; color: #f08b84; font: 600 18.500px/50px "Open Sans", sans-serif; letter-spacing: -.1px; text-align: center; position: relative; }
.tab-group::after { content: ""; position: absolute; left: 3px; right: 3px; bottom: -6px; height: 3px; border-radius: 2px 2px 0 0; background: #a56060; }
.tab-active { width: 48px; height: 48px; margin-left: 3px; border-radius: 12px; background: #353439; display: grid; place-items: center; }
.tab-new { margin-left: 24px; }
.win { margin-left: auto; margin-right: 27px; display: flex; align-items: center; gap: 54px; }

/* toolbar */
.toolbar { height: 60px; background: #3b3a3f; display: flex; align-items: center; flex: none; }
.nav-back { margin-left: 26px; }
.nav-fwd { margin-left: 32px; }
.nav-reload { margin-left: 24px; }
.nav-mark { margin-left: 189px; }
.urlbar { margin-left: 24px; width: 816px; height: 48px; border-radius: 12px; background: #252429; display: flex; align-items: center; padding-left: 14px; flex: none; }
.url { margin-left: 23px; width: 613px; color: #f2f2f5; font: 20px/28px "Open Sans", sans-serif; letter-spacing: -.2px; }
.port { color: #b6b5ba; }
.url-sep { width: 2px; height: 24px; margin-left: 11px; background: #66656a; }
.brave { margin-left: 16px; }
.bat { margin-left: 26px; }
.extensions { display: flex; gap: 21px; margin-left: 123px; }
.extensions svg { width: 24px; height: 24px; }
.sep { width: 3px; height: 24px; border-radius: 2px; background: #252429; flex: none; }
.tool-sep { margin-left: 23px; }
.extensions.tools { margin-left: 22px; }

/* bookmarks bar */
.bookmarks { height: 53px; background: #3b3a3f; border-bottom: 2px solid #303034; padding-bottom: 6px; display: flex; align-items: center; flex: none; color: #f4f4f6; font: 17px/24px "Open Sans", sans-serif; white-space: nowrap; }
.chip { height: 30px; border-radius: 6px; font-weight: 600; line-height: 29px; text-align: center; margin-right: 12px; flex: none; }
.chip-gray { width: 79px; margin-left: 9px; background: #505155; color: #dfdfe3; }
.chip-red { width: 75px; background: #574343; border: 1.500px solid #cf7a76; color: #f08b84; line-height: 27px; }
.chip-green { width: 62px; background: #445048; color: #79c98b; margin-right: 20px; }
.apps { margin-right: 20px; }
.bm { display: flex; align-items: center; flex: none; letter-spacing: .09px; }
.bm-1 { margin-left: 20px; width: 232px; gap: 10px; }
.bm-2 { width: 231px; gap: 9px; }
.bm-3 { width: 233px; gap: 8px; }
.bm-4 { width: 224px; gap: 11px; }
.bm-5 { width: 430px; gap: 10px; }
.more { margin-right: 26px; }
.folder { margin-left: 20px; }
.allbm { margin-left: 10px; }

/* page */
.viewport { height: 905px; display: flex; overflow: hidden; flex: none; }
.page { width: 1897px; padding: 0 36px; background: linear-gradient(115deg, #151b2b 0%, #18202e 35%, #1b2432 65%, #1f2737 100%); flex: none; }
.plans { display: grid; grid-template-columns: 576px 577px 576px; gap: 48px; height: 815px; align-items: start; }
.plan { font-size: 10px; height: 695px; padding: 0 3.600em; border: 3px solid #374151; border-top: 0; border-radius: 0 0 12px 12px; background: linear-gradient(135deg, #1e2933, #1e2735 12%, #1e2735 75%, #1f2a34); }
.cta { height: 6.100em; margin-top: -7px; border-radius: .8em; background: #384151; display: grid; place-items: center; color: #fff; font-weight: 600; }
.cta span { font-size: 2.100em; line-height: 1.400; }
.plan h3 { margin: 2.050em 0 1.048em; font-size: 2.400em; line-height: 1.417em; font-weight: 600; color: #fff; }
.plan ul { list-style: none; margin: 0; padding: 0; display: grid; gap: 2em; }
.plan li { display: flex; gap: .865em; height: 1.490em; font-size: 2.080em; line-height: 1.490em; letter-spacing: .002em; color: #c9cdd4; }
.plan li i { width: 1.442em; height: 1.442em; margin-top: .130em; border-radius: 50%; background: #1c3333; display: grid; place-items: center; flex: none; }
.plan li svg { width: .880em; height: .880em; }
.plan .limits { margin-top: 2.600em; padding-top: 2.350em; border-top: 1px solid #374151; }
.limits li { color: #8f96a3; }
.plan .limits i { background: #374151; }
.limits i::after { content: ""; width: 12px; height: 12px; border-radius: 50%; background: #6b7280; }
.popular { font-size: 10.500px; width: 604px; height: 724px; margin-left: -14px; border-color: #16a34a; background: linear-gradient(150deg, #1f2837, #1f2934 50%, #1f2837 52%); box-shadow: 0 0 0 1.500px rgba(22, 163, 74, .2), 0 25px 40px -8px rgba(15, 25, 30, .35); position: relative; }
.popular .cta { margin-top: -11px; background: linear-gradient(100deg, #16a34a, #15803d); box-shadow: 0 12px 18px -4px rgba(18, 30, 38, .6); }
.plan.popular h3 { margin-bottom: 1em; }
.enterprise { background: linear-gradient(135deg, #1f2837 70%, #212c35); }
.enterprise .cta { margin-top: -5px; }

.perks { display: grid; grid-template-columns: 576px 577px 576px; gap: 48px; }
.perk { height: 240px; border: 1px solid rgba(22, 163, 74, .12); border-radius: 20px; padding-top: 36px; background: rgba(22, 163, 74, .050); }
.perk-icon { width: 96px; height: 96px; margin: 0 auto; border-radius: 20px; background: linear-gradient(135deg, rgba(22, 163, 74, .13), rgba(22, 163, 74, .17)); display: grid; place-items: center; }
.perk-icon svg { width: 48px; height: 48px; fill: none; stroke: #16a34a; stroke-width: 2; stroke-linecap: round; stroke-linejoin: round; }

.scrollbar { width: 23px; background: #fcfcfc; display: flex; flex-direction: column; align-items: center; padding: 6px 1px 5px 0; flex: none; }
.thumb { width: 13px; height: 136px; margin: 520px 0 auto; border-radius: 7px; background: #8b8b8b; }
```
